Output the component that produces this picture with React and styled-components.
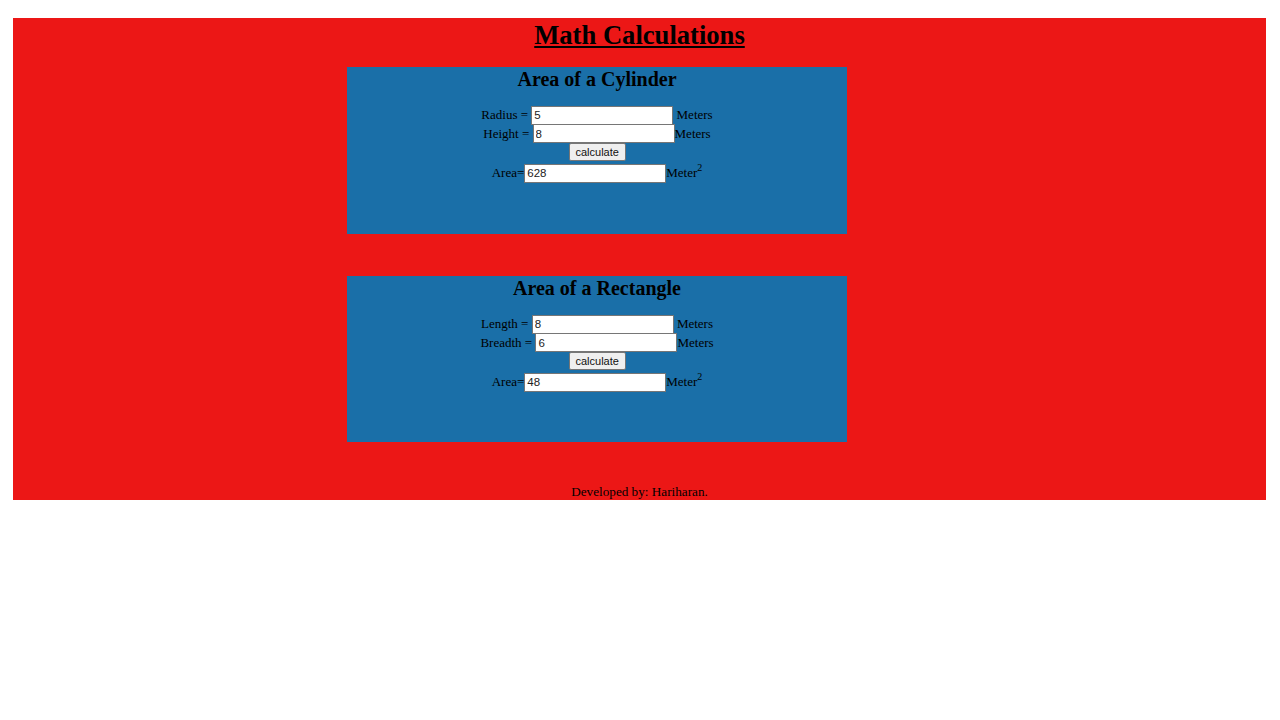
import React from "react";
import styled, { createGlobalStyle } from "styled-components";

const Global = createGlobalStyle`
  html, body { margin: 0; padding: 0; background: #ffffff; }
  body { font-family: "Liberation Serif", "Times New Roman", serif; color: #000; }
`;

const Page = styled.div`
  margin: 18px 14px 0 13px;
  background: #ec1716;
  padding-bottom: 1px;
  overflow: hidden;
`;

const Title = styled.h1`
  margin: 0;
  padding-top: 2px;
  height: 28px;
  font-size: 26.6px;
  line-height: 30px;
  font-weight: bold;
  text-decoration: underline;
  text-align: center;
`;

const Card = styled.section`
  margin: ${(p) => p.$top}px 0 0 334px;
  width: 500px;
  height: ${(p) => p.$h}px;
  background: #1a6fa8;
  text-align: center;
`;

const CardTitle = styled.h2`
  margin: 0;
  padding-top: 1px;
  font-size: 20px;
  line-height: 22px;
  font-weight: bold;
`;

const Form = styled.div`
  margin-top: 16px;
  display: flex;
  flex-direction: column;
  align-items: center;
`;

const Row = styled.div`
  display: flex;
  align-items: center;
  justify-content: center;
  height: ${(p) => p.$h || 18.5}px;
  margin-top: ${(p) => p.$mt || 0}px;
  font-size: 13px;
  white-space: pre;
`;

const Input = styled.input`
  box-sizing: border-box;
  width: 142px;
  height: 19px;
  border: 1px solid #767676;
  border-radius: 0;
  padding: 0 2px;
  font-family: "Liberation Sans", Arial, sans-serif;
  font-size: 11.5px;
  color: #222;
  background: #fff;
`;

const Button = styled.button`
  box-sizing: border-box;
  width: 57px;
  height: 18px;
  padding: 0 6px;
  border: 1px solid #767676;
  border-radius: 2px;
  background: #efefef;
  font-family: "Liberation Sans", Arial, sans-serif;
  font-size: 11px;
  color: #111;
`;

const Unit = styled.span`
  display: inline-block;
`;

const Sup = styled.sup`
  font-size: 10px;
  line-height: 0;
  vertical-align: 6px;
`;

const Footer = styled.p`
  margin: 42px 0 0;
  font-size: 13.2px;
  line-height: 15px;
  text-align: center;
`;

function Calc({ title, top, h, a, b }) {
  return (
    <Card $top={top} $h={h}>
      <CardTitle>{title}</CardTitle>
      <Form>
        <Row>
          {a.label}
          <Input defaultValue={a.value} />
          {a.unit}
        </Row>
        <Row>
          {b.label}
          <Input defaultValue={b.value} />
          {b.unit}
        </Row>
        <Row $h={18}>
          <Button>calculate</Button>
        </Row>
        <Row $mt={3}>
          Area=
          <Input defaultValue={a.result} />
          <Unit>
            Meter<Sup>2</Sup>
          </Unit>
        </Row>
      </Form>
    </Card>
  );
}

export default function App() {
  return (
    <>
      <Global />
      <Page>
        <Title>Math Calculations</Title>
        <Calc
          title="Area of a Cylinder"
          top={19}
          h={167}
          a={{ label: "Radius = ", value: "5", unit: " Meters", result: "628" }}
          b={{ label: "Height = ", value: "8", unit: "Meters" }}
        />
        <Calc
          title="Area of a Rectangle"
          top={42}
          h={166}
          a={{ label: "Length = ", value: "8", unit: " Meters", result: "48" }}
          b={{ label: "Breadth = ", value: "6", unit: "Meters" }}
        />
        <Footer>Developed by: Hariharan.</Footer>
      </Page>
    </>
  );
}
